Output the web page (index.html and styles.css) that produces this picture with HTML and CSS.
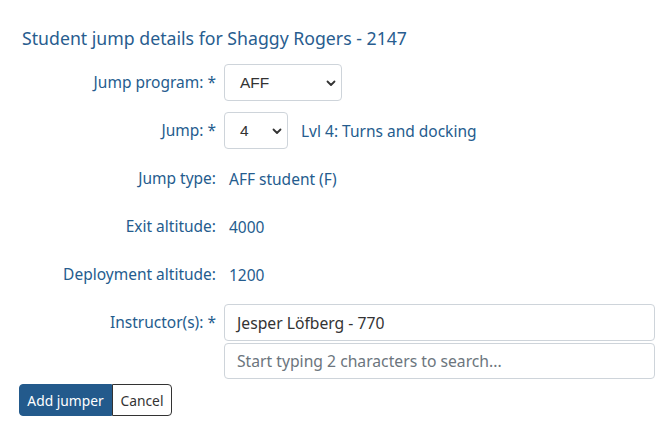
FILE: index.html
```html
<!DOCTYPE html>
<html>
<head>
<meta charset="utf-8">
<link rel="stylesheet" href="styles.css">
</head>
<body>
<div class="page">
  <h2 class="title">Student jump details for Shaggy Rogers - 2147</h2>
  <form class="form">
    <label class="lbl">Jump program: *</label>
    <div class="ctl">
      <div class="sel sel-wide">
        <span class="sel-text">AFF</span>
        <svg class="chev" width="10" height="7" viewBox="0 0 10 7"><path d="M1.5 1.5 L5 5 L8.5 1.5" fill="none" stroke="#333" stroke-width="1.8" stroke-linecap="round" stroke-linejoin="round"/></svg>
      </div>
    </div>

    <label class="lbl">Jump: *</label>
    <div class="ctl">
      <div class="sel sel-narrow">
        <span class="sel-text">4</span>
        <svg class="chev" width="10" height="7" viewBox="0 0 10 7"><path d="M1.5 1.5 L5 5 L8.5 1.5" fill="none" stroke="#333" stroke-width="1.8" stroke-linecap="round" stroke-linejoin="round"/></svg>
      </div>
      <span class="note">Lvl 4: Turns and docking</span>
    </div>

    <label class="lbl">Jump type:</label>
    <div class="ctl val">AFF student (F)</div>

    <label class="lbl">Exit altitude:</label>
    <div class="ctl val">4000</div>

    <label class="lbl">Deployment altitude:</label>
    <div class="ctl val">1200</div>

    <label class="lbl">Instructor(s): *</label>
    <div class="ctl stack">
      <div class="inp">Jesper Löfberg - 770</div>
      <input class="inp inp-search" type="text" placeholder="Start typing 2 characters to search...">
    </div>
  </form>
  <div class="btns">
    <button class="btn btn-primary" type="button">Add jumper</button><button class="btn btn-cancel" type="button">Cancel</button>
  </div>
</div>
</body>
</html>
```
FILE: styles.css
```css
html, body {
  margin: 0;
  padding: 0;
  background: #fff;
}
body {
  font-family: "Noto Sans", "Open Sans", sans-serif;
  color: #255c8e;
  font-size: 15.5px;
}
.page {
  padding: 27px 6px 0 19px;
}
.title {
  margin: 0 0 15px 3px;
  font-size: 17.7px;
  font-weight: 400;
  line-height: 22px;
  color: #285d8f;
}
.form {
  display: grid;
  grid-template-columns: 197px 1fr;
  column-gap: 8px;
  row-gap: 11px;
}
.lbl {
  text-align: right;
  height: 37px;
  line-height: 37px;
  white-space: nowrap;
}
.ctl {
  display: flex;
  align-items: center;
  gap: 13px;
  min-height: 37px;
  white-space: nowrap;
}
.val {
  padding-left: 5px;
}
.sel {
  position: relative;
  box-sizing: border-box;
  height: 37px;
  border: 1px solid #ced4da;
  border-radius: 4px;
  display: flex;
  align-items: center;
  padding-left: 15px;
  color: #333;
  background: #fff;
}
.sel-wide { width: 118px; }
.sel-narrow { width: 64px; }
.sel-text {
  font-family: "Liberation Sans", Arial, sans-serif;
  font-size: 15.5px;
}
.chev {
  position: absolute;
  right: 5px;
  top: 15px;
}
.note {
  color: #255c8e;
}
.stack {
  flex-direction: column;
  align-items: stretch;
  gap: 2px;
}
.inp {
  box-sizing: border-box;
  height: 37px;
  border: 1px solid #ced4da;
  border-radius: 4px;
  padding: 0 12px;
  display: flex;
  align-items: center;
  color: #333;
  font-family: "Noto Sans", "Open Sans", sans-serif;
  font-size: 15.7px;
  background: #fff;
  width: 100%;
}
.inp-search {
  height: 36px;
  outline: none;
}
.inp-search::placeholder {
  color: #6c757d;
}
.btns {
  display: flex;
  margin-top: 5px;
}
.btn {
  box-sizing: border-box;
  height: 32px;
  font-family: "Noto Sans", "Open Sans", sans-serif;
  font-size: 13.8px;
  padding: 0;
  margin: 0;
  white-space: nowrap;
  cursor: pointer;
}
.btn-primary {
  background: #235a8c;
  color: #fff;
  border: 1px solid #235a8c;
  border-radius: 4px 0 0 4px;
  width: 93px;
}
.btn-cancel {
  background: #fff;
  color: #333;
  border: 1px solid #333;
  border-radius: 0 4px 4px 0;
  width: 60px;
}
```
